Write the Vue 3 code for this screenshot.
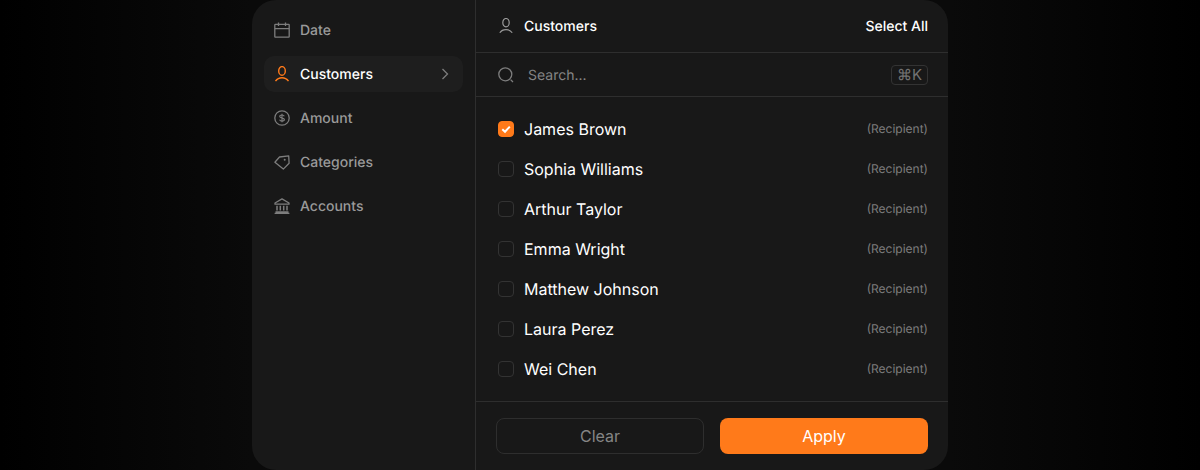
<script setup>
const navItems = [
  { key: 'date', label: 'Date' },
  { key: 'customers', label: 'Customers', active: true },
  { key: 'amount', label: 'Amount' },
  { key: 'categories', label: 'Categories' },
  { key: 'accounts', label: 'Accounts' },
]
const customers = [
  { name: 'James Brown', checked: true },
  { name: 'Sophia Williams' },
  { name: 'Arthur Taylor' },
  { name: 'Emma Wright' },
  { name: 'Matthew Johnson' },
  { name: 'Laura Perez' },
  { name: 'Wei Chen' },
]
</script>

<template>
  <div class="page">
    <div class="panel">
      <aside class="sidebar">
        <div v-for="item in navItems" :key="item.key" class="nav" :class="{ active: item.active }">
          <svg class="icon" viewBox="0 0 16 16" fill="none" stroke="currentColor" stroke-width="1.3">
            <template v-if="item.key === 'date'">
              <rect x="0.8" y="2.4" width="14.4" height="12.800" rx="0.6" />
              <path d="M0.800 6.700h14.400M4.500 0.500v3.400M11.500 0.500v3.400" />
            </template>
            <template v-else-if="item.key === 'customers'">
              <ellipse cx="8" cy="4.900" rx="3.300" ry="4.300" stroke-width="1.400" />
              <path d="M1.500 15.200C3.200 12.800 5.400 11.800 8 11.800s4.800 1 6.500 3.400" stroke-width="1.400" />
            </template>
            <template v-else-if="item.key === 'amount'">
              <circle cx="8" cy="8" r="7.200" />
              <path d="M10.300 6.300C9.900 5.400 9 5 8 5c-1.300 0-2.300.6-2.300 1.600 0 2.100 4.700 1 4.700 3 0 1-1.100 1.500-2.400 1.500-1.100 0-2-.5-2.500-1.300M8 3.800v8.400" stroke-width="1.100" />
            </template>
            <template v-else-if="item.key === 'categories'">
              <path d="M0.900 8.300 5.500 3 14.700 1.800 15.100 9.300 9.300 15.100Z" stroke-linejoin="round" />
              <circle cx="10.700" cy="5.800" r="1" fill="currentColor" stroke="none" />
            </template>
            <template v-else>
              <path d="M8 0.900 15 5v1.200H1V5Z" stroke-linejoin="round" />
              <path d="M3 7.800v4.600M6.300 7.800v4.600M9.700 7.800v4.600M13 7.800v4.600" stroke-width="1.500" />
              <path d="M1.500 14h13M0.600 15.500h14.800" />
            </template>
          </svg>
          <span class="nav-label">{{ item.label }}</span>
          <svg v-if="item.active" class="chevron" viewBox="0 0 8 12" fill="none" stroke="currentColor" stroke-width="1.300">
            <path d="M1.500 1 6.500 6 1.500 11" />
          </svg>
        </div>
      </aside>

      <section class="content">
        <header class="head">
          <div class="head-title">
            <svg class="icon head-icon" viewBox="0 0 16 16" fill="none" stroke="currentColor" stroke-width="1.200">
              <ellipse cx="8" cy="4.700" rx="3.200" ry="4.200" />
              <path d="M1.800 14.800C3.200 12.600 5.400 11.600 8 11.600s4.800 1 6.200 3.200" />
            </svg>
            <span class="shifted">Customers</span>
          </div>
          <span class="shifted">Select All</span>
        </header>

        <div class="search">
          <svg class="search-icon" viewBox="0 0 16 16" fill="none" stroke="currentColor" stroke-width="1.300">
            <circle cx="7.300" cy="7.300" r="6.500" />
            <path d="M12.600 12.600 15 15" />
          </svg>
          <span class="placeholder shifted">Search...</span>
          <kbd class="kbd">⌘K</kbd>
        </div>

        <ul class="list">
          <li v-for="c in customers" :key="c.name" class="row">
            <span class="box" :class="{ checked: c.checked }">
              <svg v-if="c.checked" viewBox="0 0 16 16" fill="none" stroke="#fff" stroke-width="2">
                <path d="M4.300 8.300 7 10.800 11.800 5.600" />
              </svg>
            </span>
            <span class="name">{{ c.name }}</span>
            <span class="role">(Recipient)</span>
          </li>
        </ul>

        <footer class="foot">
          <button class="btn clear">Clear</button>
          <button class="btn apply">Apply</button>
        </footer>
      </section>
    </div>
  </div>
</template>

<style>
html, body { margin: 0; background: #000; }
</style>

<style scoped>
.page {
  width: 1200px;
  height: 470px;
  display: flex;
  justify-content: center;
  background: linear-gradient(90deg, #000 0, #0a0a0a 250px, #0a0a0a 950px, #000 100%);
  font-family: Inter, "Liberation Sans", sans-serif;
  text-rendering: geometricPrecision;
  overflow: hidden;
}
.panel {
  width: 696px;
  height: 470px;
  display: flex;
  background: #181818;
  border-radius: 24px;
}
.sidebar {
  width: 224px;
  box-sizing: border-box;
  padding: 12px;
  display: flex;
  flex-direction: column;
  gap: 8px;
  border-right: 1px solid #2e2e2e;
}
.nav {
  height: 36px;
  display: flex;
  align-items: center;
  gap: 10px;
  padding: 0 14px 0 10px;
  border-radius: 10px;
  font-size: 14px;
  line-height: 20px;
  font-weight: 500;
  color: #9a9a9a;
}
.nav.active {
  background: #1e1e1e;
  color: #fff;
}
.nav.active .icon { color: #ff7a1a; }
.icon {
  width: 16px;
  height: 16px;
  color: #7d7d7d;
  flex: none;
}
.nav-label {
  flex: 1;
  padding-top: 2px;
}
.shifted { padding-top: 2px; }
.chevron {
  width: 8px;
  height: 12px;
  color: #7d7d7d;
}
.content {
  flex: 1;
  display: flex;
  flex-direction: column;
  min-width: 0;
}
.head {
  height: 53px;
  box-sizing: border-box;
  flex: none;
  display: flex;
  align-items: center;
  justify-content: space-between;
  padding: 0 20px 0 22px;
  border-bottom: 1px solid #2e2e2e;
  font-size: 14px;
  line-height: 20px;
  font-weight: 500;
  color: #fff;
}
.head-title {
  display: flex;
  align-items: center;
  gap: 10px;
}
.head-icon { color: #9a9a9a; }
.search {
  height: 44px;
  box-sizing: border-box;
  flex: none;
  display: flex;
  align-items: center;
  padding: 0 20px 0 22px;
  border-bottom: 1px solid #2e2e2e;
}
.search-icon {
  width: 16px;
  height: 16px;
  color: #7d7d7d;
  margin-right: 14px;
}
.placeholder {
  flex: 1;
  font-size: 14px;
  line-height: 20px;
  color: #858585;
}
.kbd {
  box-sizing: border-box;
  width: 37px;
  height: 20px;
  display: flex;
  align-items: center;
  justify-content: center;
  border: 1px solid #333;
  border-radius: 4px;
  font-family: Inter, "DejaVu Sans", sans-serif;
  font-size: 15px;
  color: #727272;
}
.list {
  list-style: none;
  margin: 0;
  padding: 12px 20px 12px 22px;
  flex: 1;
}
.row {
  height: 40px;
  display: flex;
  align-items: center;
}
.box {
  box-sizing: border-box;
  width: 16px;
  height: 16px;
  border: 1px solid #333;
  border-radius: 4px;
  margin-right: 10px;
  flex: none;
}
.box.checked {
  background: #ff7a1a;
  border-color: #ff7a1a;
}
.box svg {
  display: block;
  width: 16px;
  height: 16px;
  margin: -1px;
}
.name {
  flex: 1;
  font-size: 16px;
  line-height: 24px;
  font-weight: 400;
  color: #fff;
}
.role {
  font-size: 12px;
  line-height: 16px;
  color: #7d7d7d;
}
.foot {
  flex: none;
  display: grid;
  grid-template-columns: 1fr 1fr;
  gap: 16px;
  padding: 16px 20px;
  border-top: 1px solid #2e2e2e;
}
.btn {
  height: 36px;
  border-radius: 8px;
  font-family: inherit;
  font-size: 16px;
  line-height: 24px;
  font-weight: 400;
  box-sizing: border-box;
  padding: 0;
}
.clear {
  background: transparent;
  border: 1px solid #2e2e2e;
  color: #858585;
}
.apply {
  background: #ff7a1a;
  border: 0;
  color: #fff;
}
</style>
